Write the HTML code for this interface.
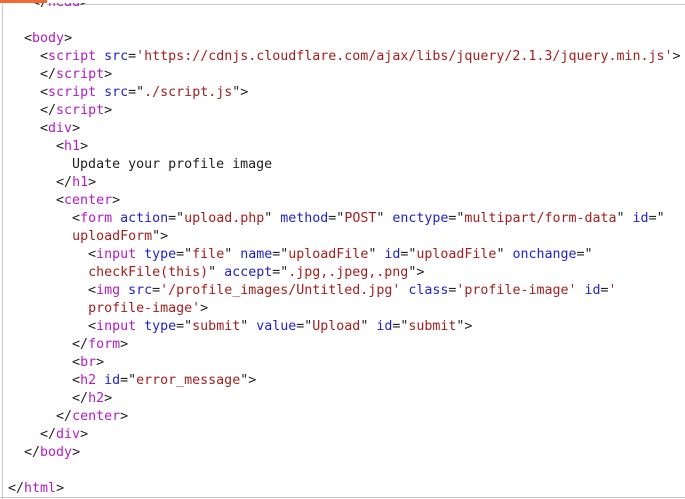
<!DOCTYPE html>
<html><head><style>
html,body{margin:0;padding:0;background:#fff;width:685px;height:499px;overflow:hidden;position:relative}
.bar{position:absolute;left:0;top:0;width:47px;height:3px;background:#f06a35}
.hl{position:absolute;left:47px;top:4px;width:638px;height:1px;background:#c8c8c8}
.vl{position:absolute;left:2px;top:4px;width:1px;height:495px;background:#c8c8c8}
.bl{position:absolute;left:0;top:497px;width:685px;height:1px;background:#c8c8c8}
pre{position:absolute;left:0;margin:0;font-family:"DejaVu Sans Mono","Liberation Mono",monospace;font-size:13.3px;line-height:18px;color:#222}
.t{color:#b21cc5}.a{color:#2222cc}.v{color:#a31f1f}
.clip{position:absolute;left:0;top:3px;width:685px;height:494px;overflow:hidden}
.clip pre{top:-9px}
</style></head><body>
<div class="bar"></div><div class="hl"></div><div class="vl"></div><div class="bl"></div>
<div class="clip"><pre>    &lt;/<span class="t">head</span>&gt;

   &lt;<span class="t">body</span>&gt;
     &lt;<span class="t">script</span> <span class="a">src</span>=<span class="v">'https://cdnjs.cloudflare.com/ajax/libs/jquery/2.1.3/jquery.min.js'</span>&gt;
     &lt;/<span class="t">script</span>&gt;
     &lt;<span class="t">script</span> <span class="a">src</span>="<span class="v">./script.js</span>"&gt;
     &lt;/<span class="t">script</span>&gt;
     &lt;<span class="t">div</span>&gt;
       &lt;<span class="t">h1</span>&gt;
         Update your profile image
       &lt;/<span class="t">h1</span>&gt;
       &lt;<span class="t">center</span>&gt;
         &lt;<span class="t">form</span> <span class="a">action</span>="<span class="v">upload.php</span>" <span class="a">method</span>="<span class="v">POST</span>" <span class="a">enctype</span>="<span class="v">multipart/form-data</span>" <span class="a">id</span>="
         <span class="v">uploadForm</span>"&gt;
           &lt;<span class="t">input</span> <span class="a">type</span>="<span class="v">file</span>" <span class="a">name</span>="<span class="v">uploadFile</span>" <span class="a">id</span>="<span class="v">uploadFile</span>" <span class="a">onchange</span>="
           <span class="v">checkFile(this)</span>" <span class="a">accept</span>="<span class="v">.jpg,.jpeg,.png</span>"&gt;
           &lt;<span class="t">img</span> <span class="a">src</span>=<span class="v">'/profile_images/Untitled.jpg'</span> <span class="a">class</span>=<span class="v">'profile-image'</span> <span class="a">id</span>=<span class="v">'</span>
           <span class="v">profile-image'</span>&gt;
           &lt;<span class="t">input</span> <span class="a">type</span>="<span class="v">submit</span>" <span class="a">value</span>="<span class="v">Upload</span>" <span class="a">id</span>="<span class="v">submit</span>"&gt;
         &lt;/<span class="t">form</span>&gt;
         &lt;<span class="t">br</span>&gt;
         &lt;<span class="t">h2</span> <span class="a">id</span>="<span class="v">error_message</span>"&gt;
         &lt;/<span class="t">h2</span>&gt;
       &lt;/<span class="t">center</span>&gt;
     &lt;/<span class="t">div</span>&gt;
   &lt;/<span class="t">body</span>&gt;

 &lt;/<span class="t">html</span>&gt;</pre></div>
</body></html>
